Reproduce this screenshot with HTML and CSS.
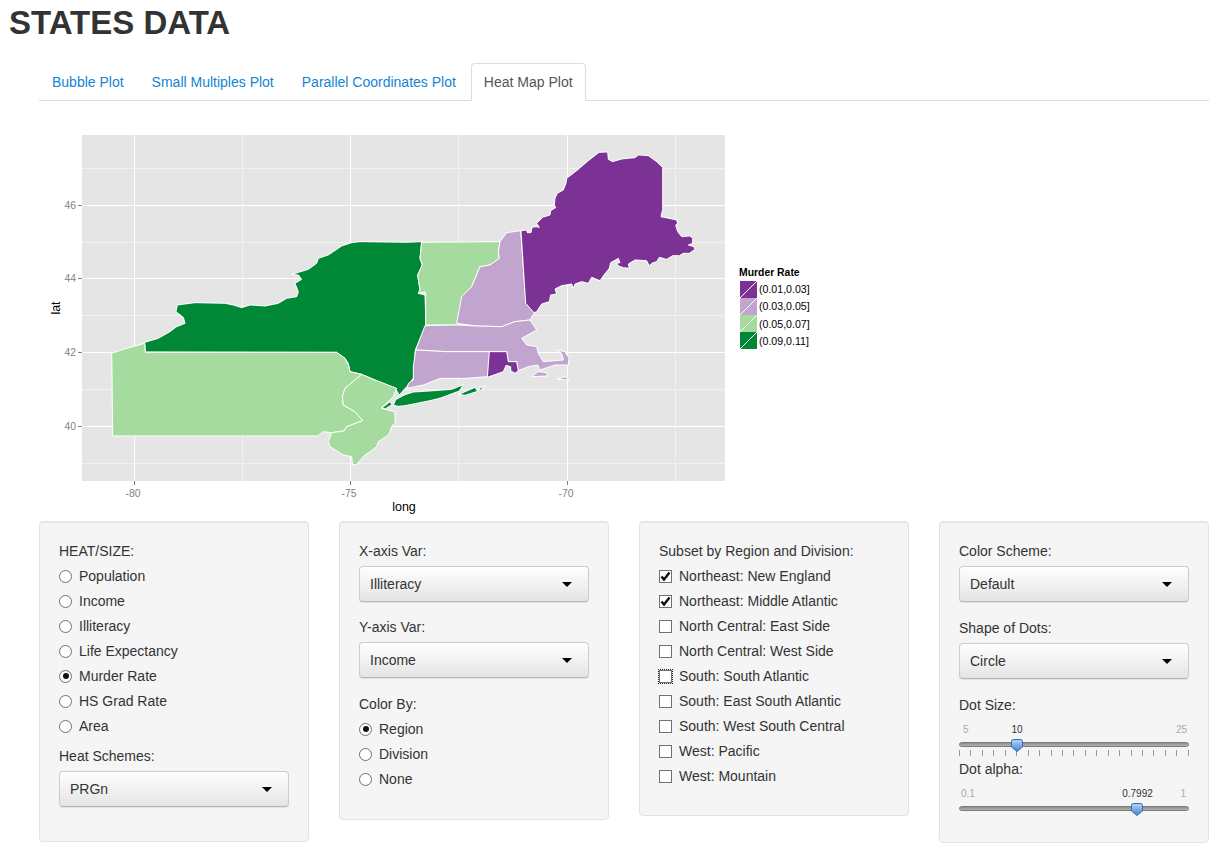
FILE: index.html
```html
<!DOCTYPE html>
<html lang="en">
<head>
<meta charset="utf-8">
<title>STATES DATA</title>
<link rel="stylesheet" href="styles.css">
</head>
<body>
<div class="page">
  <h2 class="title">STATES DATA</h2>
  <ul class="tabs">
    <li class="tab"><a href="#">Bubble Plot</a></li>
    <li class="tab"><a href="#">Small Multiples Plot</a></li>
    <li class="tab"><a href="#">Parallel Coordinates Plot</a></li>
    <li class="tab active"><a href="#">Heat Map Plot</a></li>
  </ul>

  <svg class="plot" width="780" height="396" viewBox="39 125 780 396" role="img" aria-label="Heat map of the north-eastern states by murder rate">
    <rect x="82" y="135" width="643" height="346" class="panel-bg"/>
    <path class="grid-minor" d="M82 168.500H725M82 242.500H725M82 315.500H725M82 389.500H725M82 463.500H725M242.500 135V481M458.500 135V481M675.500 135V481"/>
    <path class="grid-major" d="M82 205.500H725M82 278.500H725M82 352.500H725M82 426.500H725M134.500 135V481M350.500 135V481M567.500 135V481"/>
    <path class="tick" d="M78 205.500H82M78 278.500H82M78 352.500H82M78 426.500H82M134.500 481V485M350.500 481V485M567.500 481V485"/>

    <g transform="translate(40 130) scale(.33333)" class="states">
      <path class="s-green" d="M1145,335 L1140,385 1147,405 1133,435 1140,480 1135,490 1155,495 1158,585 1126,660 1120,745 1100,770 1078,795 1072,785 1065,775 1000,748 965,733 930,725 925,700 915,685 890,667 316,666 314,637 355,625 390,605 410,590 435,580 430,562 408,545 412,525 465,518 555,520 580,525 605,533 630,525 675,528 715,520 740,505 770,500 775,485 765,460 785,448 775,435 755,433 805,418 830,400 835,385 865,375 905,348 935,338 960,335 1100,337 Z"/>
      <path class="s-lgreen" d="M215,670 L250,658 314,640 316,667 890,667 915,685 925,705 930,725 965,733 915,775 907,800 910,825 945,845 968,872 920,890 912,903 875,908 850,905 833,918 218,918 216,720 Z"/>
      <path class="s-lgreen" d="M965,733 L1000,748 1070,775 1060,800 1045,815 1025,833 1030,837 1065,845 1065,880 1055,890 1050,905 1045,915 1015,935 1010,950 990,965 975,975 950,1003 938,1005 935,980 910,975 870,950 865,935 875,908 912,903 920,890 968,872 945,845 910,825 907,800 915,775 Z"/>
    </g>
    <g transform="translate(400 130) scale(.33333)" class="states">
      <path class="s-lgreen" d="M65,337 L300,335 295,365 298,385 270,405 240,410 215,470 190,500 175,585 77,585 77,495 75,485 55,490 60,480 53,435 67,405 60,385 Z"/>
      <path class="s-lpurple" d="M320,308 362,302 378,520 403,548 390,570 345,575 305,590 228,588 170,580 185,500 215,470 240,410 270,405 298,385 295,365 300,335 Z"/>
      <path class="s-lpurple" d="M75,587 L170,585 228,588 305,590 345,575 390,570 410,600 365,625 380,645 410,650 415,670 430,695 490,690 485,670 470,660 495,665 507,685 505,705 465,705 420,720 413,705 385,710 355,722 350,695 325,695 320,665 268,665 140,665 47,660 Z"/>
      <path class="s-lpurple" d="M47,660 140,665 268,665 270,705 262,740 195,745 120,745 70,765 22,775 25,760 40,750 40,710 Z"/>
      <path class="s-purple" d="M268,665 320,665 325,695 350,695 355,722 345,730 332,722 332,710 318,706 310,725 262,742 Z"/>
      <path class="s-lpurple" d="M395,740 415,725 440,728 442,738 Z"/>
      <path class="s-lpurple" d="M472,748 495,740 508,750 Z"/>
    </g>
    <g transform="translate(520 140) scale(.33333)" class="states">
      <path class="s-purple" d="M3,272 L20,270 22,278 33,278 36,262 48,260 58,262 50,250 68,232 90,225 92,212 107,203 103,195 105,175 112,160 130,150 138,130 140,115 170,92 205,62 237,37 263,36 265,58 278,65 305,57 345,53 355,45 385,47 410,65 428,82 428,208 423,230 470,240 473,250 467,255 473,275 485,290 510,288 518,295 518,310 505,315 522,320 525,328 508,340 490,340 478,347 458,347 440,358 418,352 410,365 395,370 388,378 380,362 345,360 325,372 328,385 310,383 295,378 290,370 300,368 295,355 272,368 268,385 252,405 240,422 215,412 205,430 185,425 165,432 160,445 155,432 125,437 105,447 110,462 92,465 88,485 65,492 50,515 42,518 17,490 Z"/>
    </g>
    <g transform="translate(330 360) scale(.33333)" class="states">
      <path class="s-green" d="M190,136 L197,119 225,104 250,96 300,93 365,88 400,74 388,93 332,114 300,122 225,137 205,139 Z"/>
      <path class="s-green" d="M387,103 435,82 443,94 405,106 Z"/>
      <path class="s-green" d="M445,86 467,78 452,90 Z"/>
      <path class="s-green" d="M155,145 180,125 186,134 166,146 Z"/>
    </g>

    <text x="76" y="209" class="axis-num end">46</text>
    <text x="76" y="282" class="axis-num end">44</text>
    <text x="76" y="356" class="axis-num end">42</text>
    <text x="76" y="430" class="axis-num end">40</text>
    <text x="133" y="497" class="axis-num mid">-80</text>
    <text x="349" y="497" class="axis-num mid">-75</text>
    <text x="566" y="497" class="axis-num mid">-70</text>
    <text x="404" y="511" class="axis-title mid">long</text>
    <text x="60" y="308" class="axis-title mid" transform="rotate(-90 60 308)">lat</text>

    <text x="739" y="276" class="legend-title">Murder Rate</text>
    <rect x="740" y="281" width="17" height="17" class="s-purple"/>
    <path class="key-line" d="M740 298L757 281"/>
    <rect x="740" y="298" width="17" height="17" class="s-lpurple"/>
    <path class="key-line" d="M740 315L757 298"/>
    <rect x="740" y="315" width="17" height="17" class="s-lgreen"/>
    <path class="key-line" d="M740 332L757 315"/>
    <rect x="740" y="332" width="17" height="17" class="s-green"/>
    <path class="key-line" d="M740 349L757 332"/>
    <text x="759" y="293" class="legend-label">(0.01,0.03]</text>
    <text x="759" y="310" class="legend-label">(0.03,0.05]</text>
    <text x="759" y="328" class="legend-label">(0.05,0.07]</text>
    <text x="759" y="345" class="legend-label">(0.09,0.11]</text>
  </svg>

  <div class="controls">
    <form class="well">
      <div class="label">HEAT/SIZE:</div>
      <div class="choices">
        <div class="choice"><span class="radio"></span>Population</div>
        <div class="choice"><span class="radio"></span>Income</div>
        <div class="choice"><span class="radio"></span>Illiteracy</div>
        <div class="choice"><span class="radio"></span>Life Expectancy</div>
        <div class="choice"><span class="radio on"></span>Murder Rate</div>
        <div class="choice"><span class="radio"></span>HS Grad Rate</div>
        <div class="choice"><span class="radio"></span>Area</div>
      </div>
      <div class="label after-choices">Heat Schemes:</div>
      <div class="select"><span>PRGn</span><i class="caret"></i></div>
    </form>

    <form class="well">
      <div class="label">X-axis Var:</div>
      <div class="select"><span>Illiteracy</span><i class="caret"></i></div>
      <div class="label">Y-axis Var:</div>
      <div class="select wide-gap"><span>Income</span><i class="caret"></i></div>
      <div class="label">Color By:</div>
      <div class="choices last longer">
        <div class="choice"><span class="radio on"></span>Region</div>
        <div class="choice"><span class="radio"></span>Division</div>
        <div class="choice"><span class="radio"></span>None</div>
      </div>
    </form>

    <form class="well">
      <div class="label">Subset by Region and Division:</div>
      <div class="choices last">
        <div class="choice"><span class="check"><svg viewBox="0 0 13 13" width="13" height="13"><path d="M2.500 6.500L5 9.500L10.500 2.500" class="tick-mark"/></svg></span>Northeast: New England</div>
        <div class="choice"><span class="check"><svg viewBox="0 0 13 13" width="13" height="13"><path d="M2.500 6.500L5 9.500L10.500 2.500" class="tick-mark"/></svg></span>Northeast: Middle Atlantic</div>
        <div class="choice"><span class="check"></span>North Central: East Side</div>
        <div class="choice"><span class="check"></span>North Central: West Side</div>
        <div class="choice"><span class="check focus"></span>South: South Atlantic</div>
        <div class="choice"><span class="check"></span>South: East South Atlantic</div>
        <div class="choice"><span class="check"></span>South: West South Central</div>
        <div class="choice"><span class="check"></span>West: Pacific</div>
        <div class="choice"><span class="check"></span>West: Mountain</div>
      </div>
    </form>

    <form class="well">
      <div class="label">Color Scheme:</div>
      <div class="select wide-gap"><span>Default</span><i class="caret"></i></div>
      <div class="label">Shape of Dots:</div>
      <div class="select wide-gap"><span>Circle</span><i class="caret"></i></div>
      <div class="label flush">Dot Size:</div>
      <div class="slider">
        <div class="ends"><span class="end-a">5</span><span class="end-b">25</span></div>
        <span class="value" style="left:58px">10</span>
        <div class="bar"></div>
        <svg class="handle" style="left:52px" width="12" height="13" viewBox="0 0 12 13"><defs><linearGradient id="hg" x1="0" y1="0" x2="0" y2="1"><stop offset="0" stop-color="#b5d4f7"/><stop offset="1" stop-color="#3f86de"/></linearGradient></defs><path d="M.5 2.500Q.5.500 2.500.500H9.500Q11.500.500 11.500 2.500V8L6 12.500L.5 8Z" fill="url(#hg)" stroke="#3e6b9e"/></svg>
        <div class="ticks"><i></i><i></i><i></i><i></i><i></i><i></i><i></i><i></i><i></i><i></i><i></i><i></i><i></i><i></i><i></i><i></i><i></i><i></i><i></i><i></i><i></i></div>
      </div>
      <div class="label flush">Dot alpha:</div>
      <div class="slider">
        <div class="ends"><span class="end-c">0.1</span><span class="end-d">1</span></div>
        <span class="value" style="left:178.500px">0.7992</span>
        <div class="bar"></div>
        <svg class="handle" style="left:172px" width="12" height="13" viewBox="0 0 12 13"><path d="M.5 2.500Q.5.500 2.500.500H9.500Q11.500.500 11.500 2.500V8L6 12.500L.5 8Z" fill="url(#hg)" stroke="#3e6b9e"/></svg>
      </div>
    </form>
  </div>
</div>
</body>
</html>
```

FILE: styles.css
```css
* { box-sizing: border-box; }
html, body { margin: 0; padding: 0; background: #fff; }
body {
  font-family: "Liberation Sans", Arial, sans-serif;
  font-size: 14px;
  line-height: 20px;
  color: #333;
  overflow: hidden;
}
.page { padding: 0 16px 0 39px; }

.title {
  margin: 0 0 0 -30px;
  height: 63px;
  padding-top: 5px;
  font-size: 33px;
  line-height: 35px;
  font-weight: 700;
  color: #333;
}

.tabs {
  display: flex;
  gap: 2px;
  margin: 0;
  padding: 0;
  list-style: none;
  height: 38px;
  border-bottom: 1px solid #ddd;
}
.tab { height: 38px; }
.tab a {
  display: block;
  height: 38px;
  padding: 8px 12px;
  border: 1px solid transparent;
  border-radius: 4px 4px 0 0;
  color: #1385d4;
  text-decoration: none;
}
.tab.active a {
  color: #555;
  background: #fff;
  border-color: #ddd #ddd #fff;
}

.plot { display: block; margin-top: 24px; }
.panel-bg { fill: #e5e5e5; }
.grid-minor { stroke: #f2f2f2; stroke-width: 1; fill: none; shape-rendering: crispEdges; }
.grid-major { stroke: #fff; stroke-width: 1; fill: none; shape-rendering: crispEdges; }
.tick { stroke: #7f7f7f; stroke-width: 1; fill: none; shape-rendering: crispEdges; }
.states path { stroke: #fff; stroke-width: 3; shape-rendering: crispEdges; stroke-linejoin: round; }
.s-purple { fill: #7b3294; }
.s-lpurple { fill: #c2a5cf; }
.s-lgreen { fill: #a6dba0; }
.s-green { fill: #008837; }
.key-line { stroke: #fff; stroke-width: 1; fill: none; }
.axis-num { font-size: 10.300px; fill: #7f7f7f; }
.axis-title { font-size: 12.500px; fill: #000; }
.end { text-anchor: end; }
.mid { text-anchor: middle; }
.legend-title { font-size: 10.400px; font-weight: 700; fill: #000; }
.legend-label { font-size: 10.600px; fill: #000; }

.controls {
  display: grid;
  grid-template-columns: repeat(4, 270px);
  gap: 30px;
  align-items: start;
}
.well {
  margin: 0;
  padding: 19px;
  background: #f5f5f5;
  border: 1px solid #e3e3e3;
  border-radius: 4px;
  box-shadow: inset 0 1px 1px rgba(0, 0, 0, .05);
}
.label { height: 20px; margin-bottom: 5px; }
.label.after-choices { margin-top: 10px; }
.label.flush { margin-bottom: 0; }

.choices { display: flex; flex-direction: column; gap: 5px; }
.choices.last { margin-bottom: 10px; }
.choices.last.longer { margin-bottom: 11px; }
.choice { display: flex; align-items: center; height: 20px; }

.radio, .check {
  flex: none;
  width: 13px;
  height: 13px;
  margin-right: 7px;
  background: #fff;
  border: 1px solid #707070;
}
.radio { border-radius: 50%; position: relative; }
.radio.on::after {
  content: "";
  position: absolute;
  left: 2.500px;
  top: 2.500px;
  width: 6px;
  height: 6px;
  border-radius: 50%;
  background: #111;
}
.check { position: relative; }
.check svg { position: absolute; left: -1px; top: -1px; display: block; }
.tick-mark { fill: none; stroke: #111; stroke-width: 2.400; }
.check.focus { outline: 1px dotted #222; outline-offset: 0; }

.select {
  display: flex;
  align-items: center;
  justify-content: space-between;
  height: 36px;
  margin-bottom: 15px;
  padding: 0 16px 0 10px;
  background: linear-gradient(#fff, #e4e4e4);
  border: 1px solid #ccc;
  border-bottom-color: #b5b5b5;
  border-radius: 4px;
  box-shadow: 0 1px 1px rgba(0, 0, 0, .08);
}
.select.wide-gap { margin-bottom: 16px; }
.caret {
  width: 0;
  height: 0;
  border-left: 5px solid transparent;
  border-right: 5px solid transparent;
  border-top: 5px solid #000;
}

.slider { position: relative; height: 44px; padding-top: 10px; }
.ends { display: flex; justify-content: space-between; height: 10px; font-size: 10px; line-height: 10px; color: #aaa; }
.end-a { margin-left: 4px; }
.end-b { margin-right: 2px; }
.end-c { margin-left: 2px; }
.end-d { margin-right: 3px; }
.value {
  position: absolute;
  top: 10px;
  transform: translateX(-50%);
  font-size: 10px;
  line-height: 10px;
  color: #333;
}
.bar {
  height: 5px;
  margin-top: 7px;
  border: 1px solid #7c7c7c;
  border-radius: 3px;
  background: linear-gradient(#8c8c8c, #b4b4b4);
}
.handle { position: absolute; top: 24px; display: block; }
.ticks { display: flex; justify-content: space-between; height: 6px; margin-top: 3px; }
.ticks i { width: 1px; background: #999; }
```
